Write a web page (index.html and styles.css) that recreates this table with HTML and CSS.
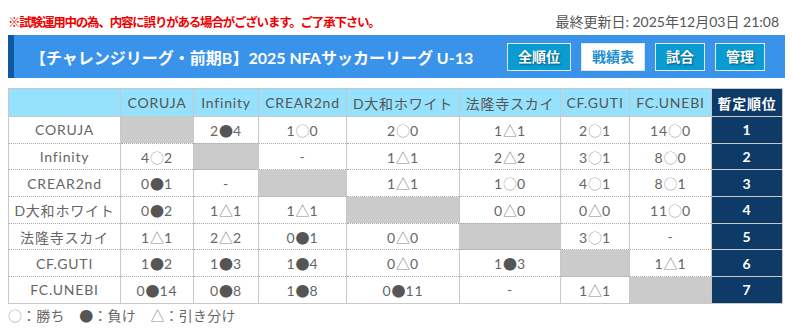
FILE: index.html
```html
<!DOCTYPE html>
<html lang="ja">
<head>
<meta charset="utf-8">
<title>戦績表</title>
<link rel="stylesheet" href="styles.css">
</head>
<body>
<div class="topline">
  <p class="notice">※試験運用中の為、内容に誤りがある場合がございます。ご了承下さい。</p>
  <p class="updated">最終更新日: 2025年12月03日 21:08</p>
</div>
<div class="titlebar">
  <h1 class="title">【チャレンジリーグ・前期B】2025 NFAサッカーリーグ U-13</h1>
  <nav class="nav">
    <a class="btn">全順位</a>
    <a class="btn active">戦績表</a>
    <a class="btn">試合</a>
    <a class="btn">管理</a>
  </nav>
</div>
<div class="scroller">
  <table class="grid">
    <colgroup>
      <col class="c0"><col class="c1"><col class="c2"><col class="c3"><col class="c4"><col class="c5"><col class="c6"><col class="c7"><col class="c8">
    </colgroup>
    <thead>
      <tr><th></th><th>CORUJA</th><th>Infinity</th><th>CREAR2nd</th><th>D大和ホワイト</th><th>法隆寺スカイ</th><th>CF.GUTI</th><th>FC.UNEBI</th><th class="rankh">暫定順位</th></tr>
    </thead>
    <tbody>
      <tr><td>CORUJA</td><td class="x"></td><td>2<span class="l">●</span>4</td><td>1<span class="w">○</span>0</td><td>2<span class="w">○</span>0</td><td>1<span class="d">△</span>1</td><td>2<span class="w">○</span>1</td><td>14<span class="w">○</span>0</td><td class="rank">1</td></tr>
      <tr><td>Infinity</td><td>4<span class="w">○</span>2</td><td class="x"></td><td>-</td><td>1<span class="d">△</span>1</td><td>2<span class="d">△</span>2</td><td>3<span class="w">○</span>1</td><td>8<span class="w">○</span>0</td><td class="rank">2</td></tr>
      <tr><td>CREAR2nd</td><td>0<span class="l">●</span>1</td><td>-</td><td class="x"></td><td>1<span class="d">△</span>1</td><td>1<span class="w">○</span>0</td><td>4<span class="w">○</span>1</td><td>8<span class="w">○</span>1</td><td class="rank">3</td></tr>
      <tr><td>D大和ホワイト</td><td>0<span class="l">●</span>2</td><td>1<span class="d">△</span>1</td><td>1<span class="d">△</span>1</td><td class="x"></td><td>0<span class="d">△</span>0</td><td>0<span class="d">△</span>0</td><td>11<span class="w">○</span>0</td><td class="rank">4</td></tr>
      <tr><td>法隆寺スカイ</td><td>1<span class="d">△</span>1</td><td>2<span class="d">△</span>2</td><td>0<span class="l">●</span>1</td><td>0<span class="d">△</span>0</td><td class="x"></td><td>3<span class="w">○</span>1</td><td>-</td><td class="rank">5</td></tr>
      <tr><td>CF.GUTI</td><td>1<span class="l">●</span>2</td><td>1<span class="l">●</span>3</td><td>1<span class="l">●</span>4</td><td>0<span class="d">△</span>0</td><td>1<span class="l">●</span>3</td><td class="x"></td><td>1<span class="d">△</span>1</td><td class="rank">6</td></tr>
      <tr><td>FC.UNEBI</td><td>0<span class="l">●</span>14</td><td>0<span class="l">●</span>8</td><td>1<span class="l">●</span>8</td><td>0<span class="l">●</span>11</td><td>-</td><td>1<span class="d">△</span>1</td><td class="x"></td><td class="rank">7</td></tr>
    </tbody>
  </table>
  <p class="legend"><span class="w">○</span>：勝ち　<span class="l">●</span>：負け　<span class="d">△</span>：引き分け</p>
</div>
</body>
</html>
```
FILE: styles.css
```css
html, body {
  background: #fff;
}
body {
  margin: 8px;
  font-family: "Lato", "Noto Sans CJK JP", sans-serif;
  color: #555;
}
p, h1 {
  margin: 0;
}
.topline {
  display: flex;
  justify-content: space-between;
  align-items: baseline;
  height: 22px;
  padding-top: 3px;
  margin-bottom: 2px;
}
.notice {
  color: #ee0000;
  font-weight: bold;
  font-size: 12.5px;
  letter-spacing: -1.2px;
}
.updated {
  color: #555;
  font-size: 14px;
  padding-right: 6px;
}
.titlebar {
  display: flex;
  align-items: center;
  justify-content: space-between;
  height: 43px;
  background: #3a93ea;
  border-left: 6px solid #0f5a9e;
  padding: 0 20px 0 16px;
}
.title {
  color: #fff;
  font-size: 16px;
  font-weight: bold;
  white-space: nowrap;
  letter-spacing: 0;
}
.nav {
  display: flex;
  gap: 10px;
  flex-shrink: 0;
}
.btn {
  display: block;
  height: 26px;
  line-height: 26px;
  padding: 0 10px;
  border: 1px solid #dfe8ee;
  background: #0a9bd1;
  color: #fff;
  font-size: 14px;
  font-weight: bold;
  white-space: nowrap;
  text-shadow: 1px 1px 2px rgba(0, 0, 0, 0.45);
}
.btn.active {
  background: #fff;
  color: #1d8fd0;
  text-shadow: none;
}
.scroller {
  margin-top: 10px;
  overflow-x: scroll;
}
.scroller::-webkit-scrollbar {
  height: 15px;
  background: #f4f4f4;
}
.scroller::-webkit-scrollbar-thumb {
  background: transparent;
}
.grid {
  width: 774px;
  table-layout: fixed;
  border-collapse: collapse;
  font-size: 14px;
  letter-spacing: 0.8px;
}
.c0 { width: 112px; }
.c1 { width: 73px; }
.c2 { width: 65px; }
.c3 { width: 88px; }
.c4 { width: 113px; }
.c5 { width: 101px; }
.c6 { width: 69px; }
.c7 { width: 82px; }
.c8 { width: 71px; }
.grid th {
  background: #96e1fb;
  color: #555;
  font-weight: normal;
  height: 27px;
  padding: 0;
  border: 1px solid #c8c8c8;
  white-space: nowrap;
}
.grid th.rankh {
  background: #0e3a67;
  color: #fff;
  font-weight: bold;
}
.grid td {
  height: 25.7px;
  padding: 0;
  text-align: center;
  color: #666;
  border-left: 1px solid #c8c8c8;
  border-right: 1px solid #c8c8c8;
  border-bottom: 1px dotted #aaa;
  white-space: nowrap;
}
.grid tbody tr:last-child td {
  border-bottom: 1px solid #c8c8c8;
}
.grid td.x {
  background: #cbcbcb;
}
.grid td.rank {
  background: #0e3a67;
  color: #fff;
  font-weight: bold;
  border-bottom: 1px solid #c8c8c8;
}
.w, .l, .d {
  font-family: "Noto Sans CJK JP", sans-serif;
  letter-spacing: 0;
}
.w {
  color: #aaa;
}
.l {
  color: #555;
}
.d {
  color: #888;
}
.legend {
  font-size: 14px;
  line-height: 20px;
  margin-top: 1px;
  color: #666;
  letter-spacing: 0.3px;
}
```
